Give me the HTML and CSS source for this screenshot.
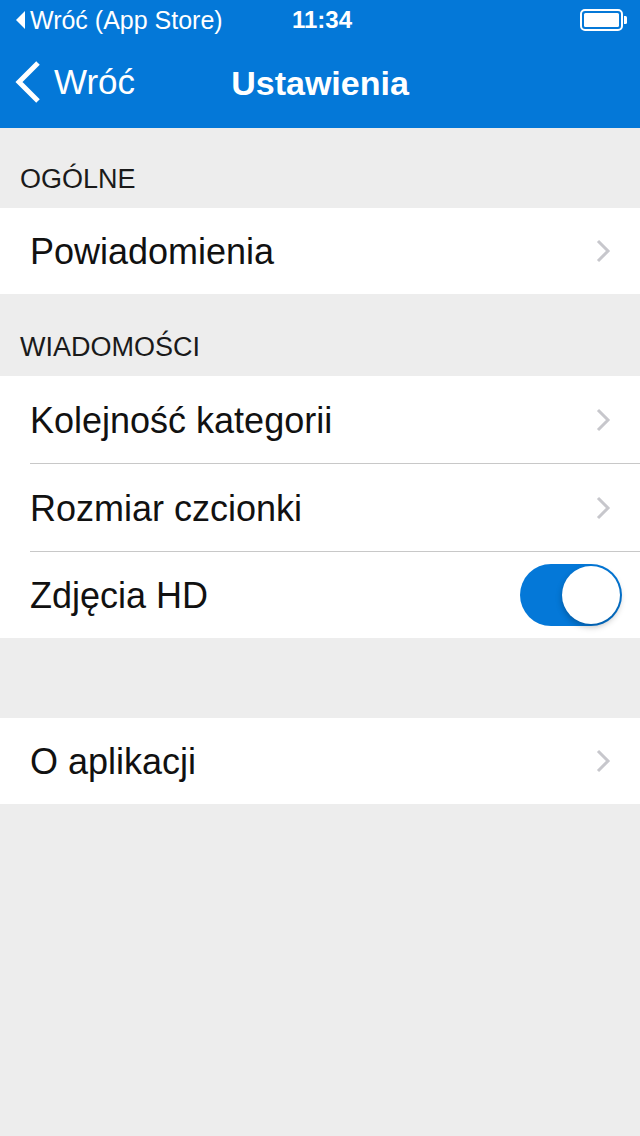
FILE: index.html
```html
<!DOCTYPE html>
<html lang="pl">

<head>
    <meta charset="UTF-8">
    <meta name="viewport" content="width=device-width, initial-scale=1.0">
    <title>Ustawienia</title>
    <link rel="stylesheet" href="styles.css">
</head>

<body>
    <header class="topbar">
        <div class="status">
            <div class="status-left">
                <svg class="status-back" width="10" height="18" viewBox="0 0 10 18">
                    <path d="M9 0 L0 9 L9 18 Z" fill="#fff" />
                </svg>
                <span>Wróć (App Store)</span>
            </div>
            <div class="status-time">11:34</div>
            <div class="status-right">
                <svg width="48" height="22" viewBox="0 0 48 22">
                    <rect x="1" y="1" width="41" height="20" rx="4" fill="none" stroke="#fff" stroke-width="2" />
                    <rect x="4" y="4" width="35" height="14" rx="1.5" fill="#fff" />
                    <path d="M44 7 h1.5 a1.5 1.5 0 0 1 1.5 1.5 v5 a1.5 1.5 0 0 1 -1.5 1.5 h-1.5 Z" fill="#fff" />
                </svg>
            </div>
        </div>
        <nav class="navbar">
            <a class="back" href="/">
                <svg width="28" height="44" viewBox="0 0 28 44">
                    <path d="M24 3 L5 22 L24 41" fill="none" stroke="#fff" stroke-width="5" />
                </svg>
                <span>Wróć</span>
            </a>
            <h1 class="title">Ustawienia</h1>
        </nav>
    </header>

    <main class="settings">
        <h2 class="group-title">OGÓLNE</h2>
        <ul class="group">
            <li class="row">
                <span>Powiadomienia</span>
                <svg class="chevron" width="16" height="26" viewBox="0 0 16 26">
                    <path d="M3 3 L13 13 L3 23" fill="none" stroke="#c7c7cc" stroke-width="3" />
                </svg>
            </li>
        </ul>

        <h2 class="group-title second">WIADOMOŚCI</h2>
        <ul class="group">
            <li class="row">
                <span>Kolejność kategorii</span>
                <svg class="chevron" width="16" height="26" viewBox="0 0 16 26">
                    <path d="M3 3 L13 13 L3 23" fill="none" stroke="#c7c7cc" stroke-width="3" />
                </svg>
            </li>
            <li class="row">
                <span>Rozmiar czcionki</span>
                <svg class="chevron" width="16" height="26" viewBox="0 0 16 26">
                    <path d="M3 3 L13 13 L3 23" fill="none" stroke="#c7c7cc" stroke-width="3" />
                </svg>
            </li>
            <li class="row">
                <span>Zdjęcia HD</span>
                <div class="toggle on"><div class="knob"></div></div>
            </li>
        </ul>

        <div class="spacer"></div>
        <ul class="group">
            <li class="row">
                <span>O aplikacji</span>
                <svg class="chevron" width="16" height="26" viewBox="0 0 16 26">
                    <path d="M3 3 L13 13 L3 23" fill="none" stroke="#c7c7cc" stroke-width="3" />
                </svg>
            </li>
        </ul>
    </main>
</body>

</html>
```

FILE: styles.css
```css
* {
    font-family: "Liberation Sans", Arial, Helvetica, sans-serif;
    margin: 0;
    padding: 0;
    box-sizing: border-box;
}

body {
    background: #ededed;
    width: 640px;
    min-height: 1136px;
}

.topbar {
    background: #0478d8;
    color: white;
    height: 128px;
}

.status {
    height: 40px;
    display: flex;
    align-items: center;
    justify-content: space-between;
    padding: 0 12px 0 16px;
    font-size: 25px;
}

.status-left {
    display: flex;
    align-items: center;
    gap: 4px;
    width: 260px;
}

.status-time {
    font-weight: bold;
    font-size: 24px;
}

.status-right {
    width: 260px;
    display: flex;
    justify-content: flex-end;
}

.navbar {
    height: 88px;
    position: relative;
    display: flex;
    align-items: center;
    justify-content: center;
}

.back {
    position: absolute;
    left: 14px;
    top: 20px;
    display: flex;
    align-items: center;
    gap: 12px;
    color: white;
    text-decoration: none;
    font-size: 35px;
}

.title {
    font-size: 34px;
    font-weight: bold;
    margin-top: -2px;
}

.group-title {
    font-size: 27px;
    font-weight: normal;
    color: #1a1a1a;
    padding: 36px 20px 0;
    height: 80px;
}

.group-title.second {
    height: 82px;
    padding-top: 38px;
}

.group {
    list-style: none;
    background: white;
    padding-left: 30px;
}

.row {
    height: 88px;
    display: flex;
    align-items: center;
    justify-content: space-between;
    padding-right: 29px;
    font-size: 36px;
    color: #111;
    border-bottom: 1px solid #c8c8c8;
}

.row:last-child {
    border-bottom: none;
    height: 86px;
}

.row span {
    margin-top: 2px;
}

.spacer {
    height: 80px;
}

.toggle {
    width: 102px;
    height: 62px;
    border-radius: 31px;
    background: #0478d8;
    position: relative;
    margin-right: -11px;
}

.knob {
    position: absolute;
    right: 2px;
    top: 2px;
    width: 58px;
    height: 58px;
    border-radius: 50%;
    background: white;
    box-shadow: 0 3px 6px rgba(0, 0, 0, 0.25);
}
```
